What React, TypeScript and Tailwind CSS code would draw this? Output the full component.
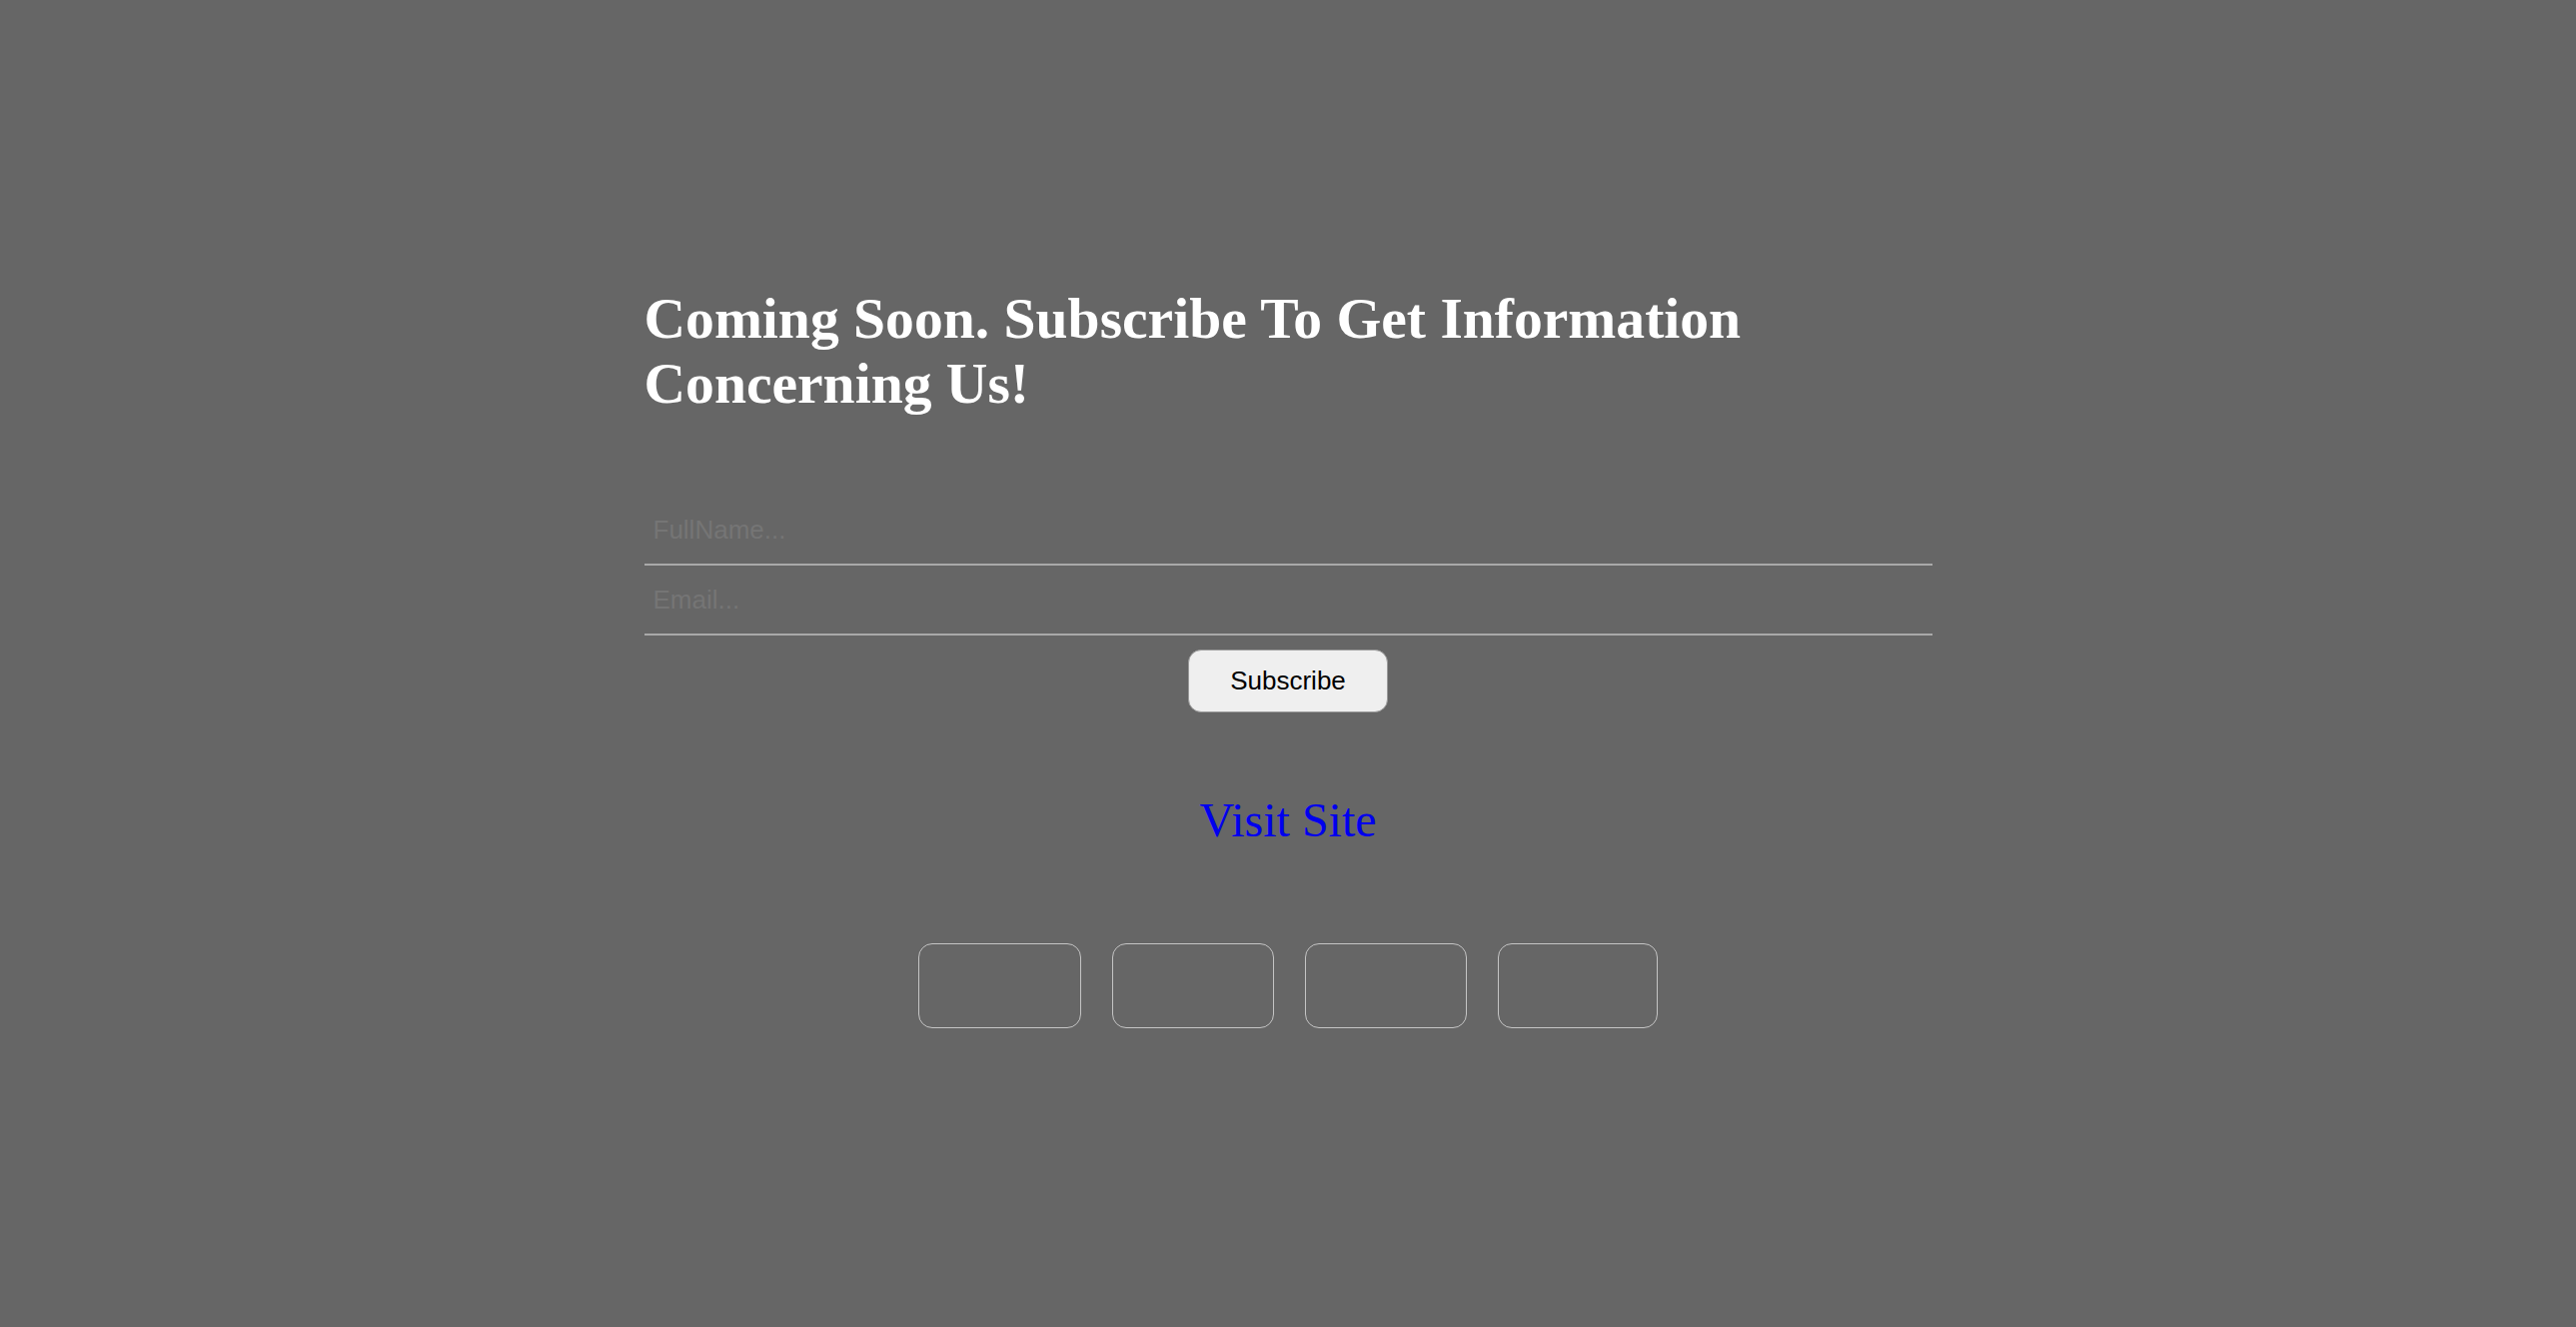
import React from "react";

export default function App() {
  return (
    <div className="min-h-[1328px] w-full bg-[#666666]">
      <div className="mx-auto w-1/2 pt-[286px]">
        <h1
          className="m-0 text-[57.6px] font-bold leading-[normal] text-white"
          style={{ fontFamily: '"Liberation Serif", "Times New Roman", serif' }}
        >
          Coming Soon. Subscribe To Get Information Concerning Us!
        </h1>
        <form
          className="mt-[80px] flex flex-col items-center"
          style={{ fontFamily: '"Liberation Sans", Arial, sans-serif' }}
          onSubmit={(e) => e.preventDefault()}
        >
          <input
            type="text"
            placeholder="FullName..."
            className="box-border block h-[70px] w-full border-0 border-b-2 border-solid border-[#a9a9a9] bg-transparent px-[9px] text-[26px] text-white outline-none placeholder:text-[#757575]"
          />
          <input
            type="email"
            placeholder="Email..."
            className="box-border block h-[70px] w-full border-0 border-b-2 border-solid border-[#a9a9a9] bg-transparent px-[9px] text-[26px] text-white outline-none placeholder:text-[#757575]"
          />
          <button
            type="submit"
            className="mt-[14px] box-border flex h-[63px] w-[200px] items-center justify-center rounded-[13px] border border-solid border-[#9a9a9a] bg-[#efefef] text-[26px] text-black"
          >
            Subscribe
          </button>
        </form>
        <div className="mt-[80px] flex justify-center">
          <a
            href="#"
            className="text-[48px] leading-[normal] text-[#0000ee]"
            style={{ fontFamily: '"Liberation Serif", "Times New Roman", serif' }}
          >
            Visit Site
          </a>
        </div>
        <div className="mt-[96px] flex justify-center">
          <div className="flex gap-[31px]">
            <a href="#" className="box-border block h-[85px] w-[163px] rounded-[14px] border border-solid border-[#c4c4c4]" />
            <a href="#" className="box-border block h-[85px] w-[162px] rounded-[14px] border border-solid border-[#c4c4c4]" />
            <a href="#" className="box-border block h-[85px] w-[162px] rounded-[14px] border border-solid border-[#c4c4c4]" />
            <a href="#" className="box-border block h-[85px] w-[160px] rounded-[14px] border border-solid border-[#c4c4c4]" />
          </div>
        </div>
      </div>
    </div>
  );
}
